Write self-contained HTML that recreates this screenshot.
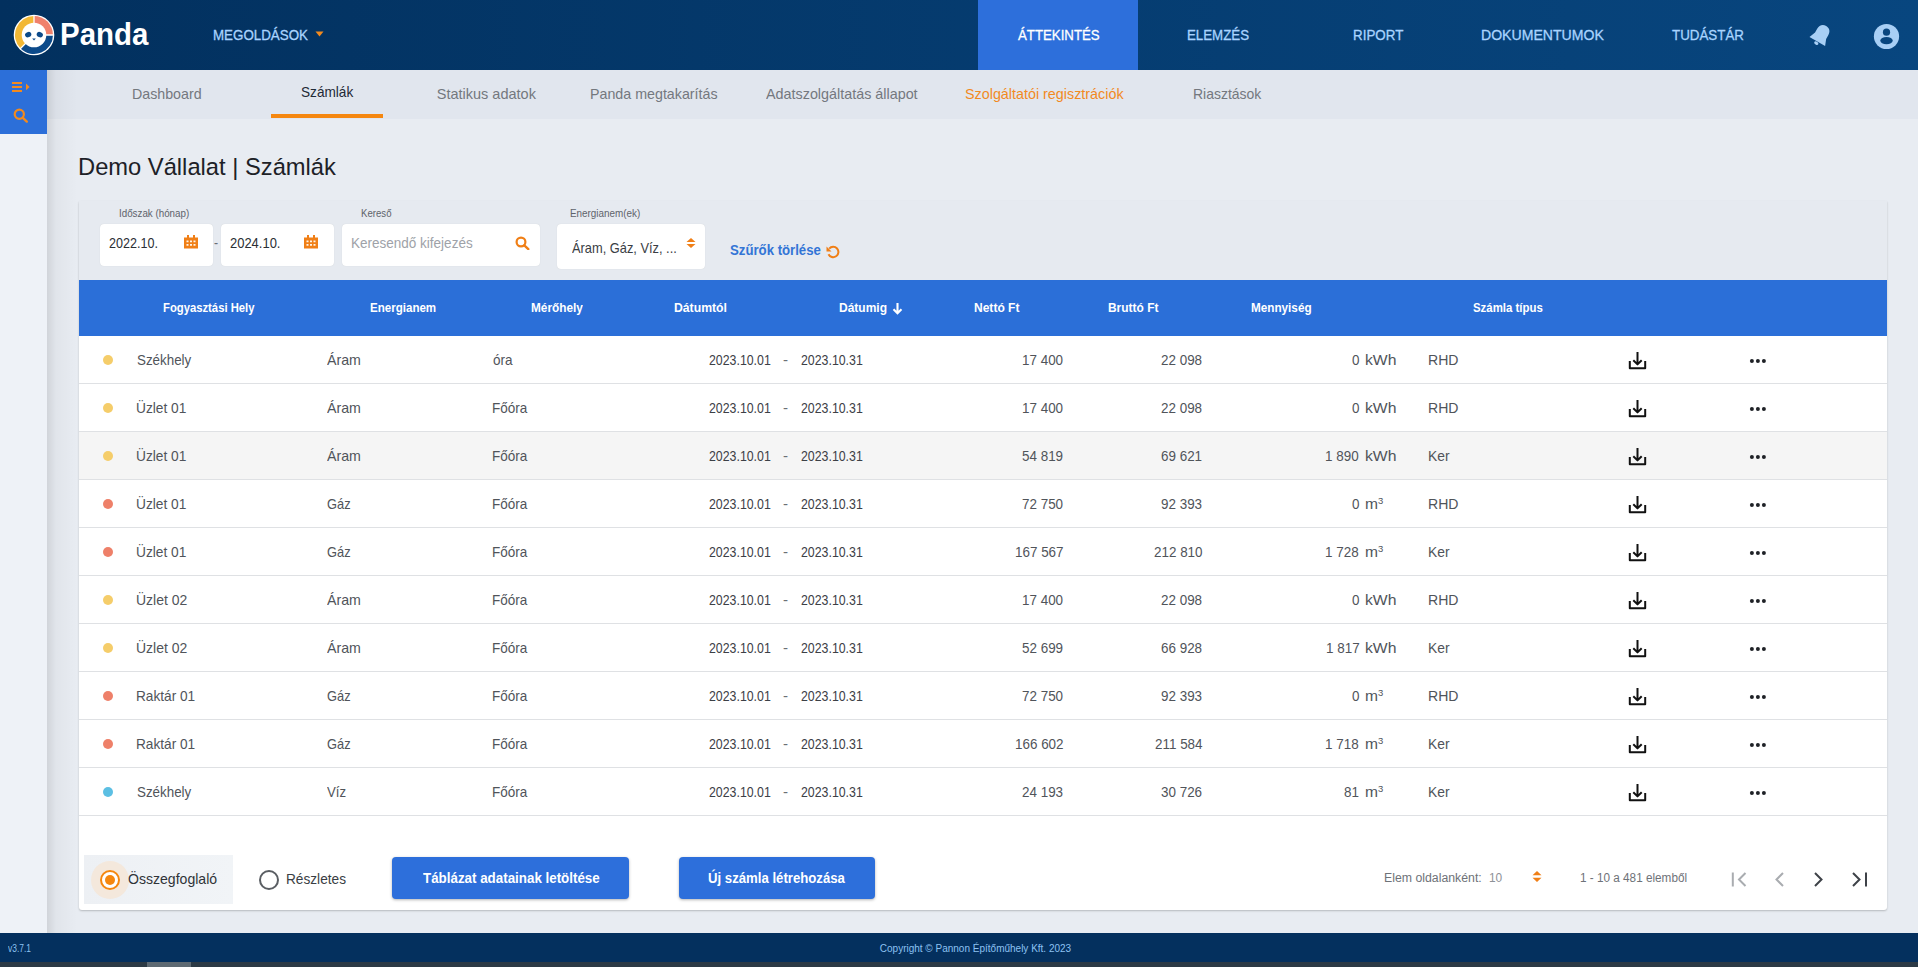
<!DOCTYPE html>
<html><head><meta charset="utf-8"><title>Panda - Számlák</title>
<style>
*{box-sizing:border-box;margin:0;padding:0}
html,body{width:1918px;height:967px;overflow:hidden}
body{background:#E8ECF2;font-family:"Liberation Sans",sans-serif;position:relative}
.a{position:absolute;display:block}
.t{position:absolute;white-space:nowrap;transform-origin:0 0;display:block}
</style></head><body>
<!-- header -->
<div class="a" style="left:0;top:0;width:1918px;height:70px;background:linear-gradient(90deg,#02305E 0%,#08467F 100%)"></div>
<div class="a" style="left:978px;top:0;width:160px;height:70px;background:#2D6FDB"></div>
<svg class="a" style="left:13px;top:14px" width="42" height="42" viewBox="0 0 42 42">
<circle cx="21" cy="21" r="20.3" fill="#FFFFFF"/>
<path d="M21 21 L21 2 A19 19 0 0 1 40 21 Z" fill="#F0816C"/>
<path d="M21 21 L40 21 A19 19 0 0 1 7.56 34.44 Z" fill="#0C4A8A"/>
<path d="M21 21 L7.56 34.44 A19 19 0 0 1 21 2 Z" fill="#F2B835"/>
<path d="M21 1.5 V21 H40.5 M21 21 L7 35" stroke="#FFFFFF" stroke-width="1.3" fill="none"/>
<circle cx="21" cy="21" r="12.3" fill="#FFFFFF"/>
<ellipse cx="15.2" cy="20.6" rx="3.2" ry="2.6" transform="rotate(-20 15.2 20.6)" fill="#0C4A8A"/>
<ellipse cx="26.8" cy="20.6" rx="3.2" ry="2.6" transform="rotate(20 26.8 20.6)" fill="#0C4A8A"/>
<path d="M19.2 24.6 L22.8 24.6 L21 26.4Z" fill="#0C4A8A"/>
</svg>
<svg class="a" style="left:315px;top:31px" width="9" height="6" viewBox="0 0 9 6"><path d="M0.5 0.5h8L4.5 5.5z" fill="#F28A1E"/></svg>
<svg class="a" style="left:1806px;top:21px" width="30" height="30" viewBox="0 0 30 30">
 <g transform="rotate(30 15 14)"><path d="M15 3.6C10.6 3.6 8.6 6.8 8.6 10.6V14.8L6 21.4H24L21.4 14.8V10.6C21.4 6.8 19.4 3.6 15 3.6Z" fill="#A8CFF5"/><ellipse cx="15" cy="23.4" rx="2.3" ry="1.5" fill="#A8CFF5"/></g></svg>
<svg class="a" style="left:1873px;top:23px" width="27" height="27" viewBox="0 0 27 27">
 <circle cx="13.5" cy="13.5" r="12.6" fill="#A8CFF5"/><circle cx="13.5" cy="9.2" r="3.6" fill="#08467F"/><ellipse cx="13.5" cy="17.6" rx="6.2" ry="3.6" fill="#08467F"/></svg>
<!-- sidebar -->
<div class="a" style="left:0;top:70px;width:47px;height:863px;background:#EEF2F7"></div>
<div class="a" style="left:0;top:70px;width:47px;height:64px;background:#2C6FD9"></div>
<svg class="a" style="left:11px;top:81px" width="20" height="12" viewBox="0 0 20 12">
 <path d="M1 1.9h10M1 5.9h10M1 9.9h10" stroke="#F28A1E" stroke-width="2"/><path d="M15 2.6v6.6l3.6-3.3z" fill="#F28A1E"/></svg>
<svg class="a" style="left:13px;top:108px" width="16" height="15" viewBox="0 0 16 15">
 <circle cx="6.3" cy="6.3" r="4.6" fill="none" stroke="#F28A1E" stroke-width="2.2"/><path d="M9.6 9.6l4.2 4" stroke="#F28A1E" stroke-width="2.4" stroke-linecap="round"/></svg>
<!-- tabs -->
<div class="a" style="left:47px;top:70px;width:1871px;height:48.7px;background:#E1E6EE"></div>
<div class="a" style="left:47px;top:70px;width:30px;height:863px;background:linear-gradient(90deg,rgba(0,0,0,.10),rgba(0,0,0,.03) 30%,rgba(0,0,0,0))"></div>
<div class="a" style="left:271px;top:114px;width:112px;height:4px;background:#F5870F"></div>
<!-- card -->
<div class="a" style="left:79px;top:201px;width:1808px;height:709px;background:#FFFFFF;border-radius:0 0 3px 3px;box-shadow:0 1px 2px rgba(0,0,0,.22)"></div>
<div class="a" style="left:79px;top:201px;width:1808px;height:79px;background:#E6EAF0"></div>
<div class="a" style="left:78px;top:204px;width:1px;height:76px;background:#D8DCE2"></div>
<!-- inputs -->
<div class="a" style="left:100px;top:224px;width:113px;height:42px;background:#fff;border-radius:4px;box-shadow:0 0 1px rgba(0,0,0,.15)"></div>
<div class="a" style="left:221px;top:224px;width:113px;height:42px;background:#fff;border-radius:4px;box-shadow:0 0 1px rgba(0,0,0,.15)"></div>
<div class="a" style="left:342px;top:224px;width:198px;height:42px;background:#fff;border-radius:4px;box-shadow:0 0 1px rgba(0,0,0,.15)"></div>
<div class="a" style="left:557px;top:224px;width:148px;height:45px;background:#fff;border-radius:4px;box-shadow:0 0 1px rgba(0,0,0,.15)"></div>
<svg class="a" style="left:184px;top:235px" width="14" height="14" viewBox="0 0 14 14"><path d="M0 2.5h14v11H0z M3 0h2v3H3z M9 0h2v3H9z" fill="#F07F16"/>
 <path d="M2.5 5.5h2v1.8h-2zM6 5.5h2v1.8H6zM9.5 5.5h2v1.8h-2zM2.5 9h2v1.8h-2zM6 9h2v1.8H6zM9.5 9h2v1.8h-2z" fill="#FFF4E6"/></svg>
<svg class="a" style="left:304px;top:235px" width="14" height="14" viewBox="0 0 14 14"><path d="M0 2.5h14v11H0z M3 0h2v3H3z M9 0h2v3H9z" fill="#F07F16"/>
 <path d="M2.5 5.5h2v1.8h-2zM6 5.5h2v1.8H6zM9.5 5.5h2v1.8h-2zM2.5 9h2v1.8h-2zM6 9h2v1.8H6zM9.5 9h2v1.8h-2z" fill="#FFF4E6"/></svg>
<svg class="a" style="left:515px;top:236px" width="15" height="14" viewBox="0 0 15 14">
 <circle cx="6" cy="6" r="4.4" fill="none" stroke="#F07F16" stroke-width="2.2"/><path d="M9.3 9.3l4 3.8" stroke="#F07F16" stroke-width="2.4" stroke-linecap="round"/></svg>
<svg class="a" style="left:686px;top:238px" width="10" height="10" viewBox="0 0 10 10"><path d="M5 0L9.5 4H0.5z M0.5 6h9L5 10z" fill="#F07F16"/></svg>
<svg class="a" style="left:825px;top:245px" width="16" height="14" viewBox="0 0 16 14">
 <path d="M4.2 3.6A5.2 5.2 0 1 1 3.5 9.2" fill="none" stroke="#F07F16" stroke-width="2"/><path d="M1.5 1.5v5h5z" fill="#F07F16"/></svg>
<!-- table header -->
<div class="a" style="left:79px;top:280px;width:1808px;height:56px;background:#2B6FD8"></div>
<svg class="a" style="left:892px;top:302px" width="11" height="13" viewBox="0 0 11 13"><path d="M5.5 1v10M1.5 7.3l4 4 4-4" fill="none" stroke="#fff" stroke-width="2.1"/></svg>
<div class="a" style="left:79px;top:336px;width:1808px;height:48px;background:#FFFFFF"></div>
<div class="a" style="left:79px;top:383px;width:1808px;height:1px;background:#DFE1E4"></div>
<div class="a" style="left:103px;top:355px;width:10px;height:10px;border-radius:50%;background:#F5CD6A"></div>
<svg class="a" style="left:1627px;top:350px" width="21" height="21" viewBox="0 0 21 21"><path d="M10.5 2v12.2M6.3 10.2l4.2 4.2 4.2-4.2M2.8 11v7.3h15.4V11" fill="none" stroke="#111" stroke-width="2" stroke-linejoin="round"/></svg>
<svg class="a" style="left:1749px;top:357px" width="18" height="6" viewBox="0 0 18 6"><circle cx="2.9" cy="4" r="2" fill="#1E2126"/><circle cx="8.9" cy="4" r="2" fill="#1E2126"/><circle cx="14.9" cy="4" r="2" fill="#1E2126"/></svg>
<div class="a" style="left:79px;top:384px;width:1808px;height:48px;background:#FFFFFF"></div>
<div class="a" style="left:79px;top:431px;width:1808px;height:1px;background:#DFE1E4"></div>
<div class="a" style="left:103px;top:403px;width:10px;height:10px;border-radius:50%;background:#F5CD6A"></div>
<svg class="a" style="left:1627px;top:398px" width="21" height="21" viewBox="0 0 21 21"><path d="M10.5 2v12.2M6.3 10.2l4.2 4.2 4.2-4.2M2.8 11v7.3h15.4V11" fill="none" stroke="#111" stroke-width="2" stroke-linejoin="round"/></svg>
<svg class="a" style="left:1749px;top:405px" width="18" height="6" viewBox="0 0 18 6"><circle cx="2.9" cy="4" r="2" fill="#1E2126"/><circle cx="8.9" cy="4" r="2" fill="#1E2126"/><circle cx="14.9" cy="4" r="2" fill="#1E2126"/></svg>
<div class="a" style="left:79px;top:432px;width:1808px;height:48px;background:#F5F5F5"></div>
<div class="a" style="left:79px;top:479px;width:1808px;height:1px;background:#DFE1E4"></div>
<div class="a" style="left:103px;top:451px;width:10px;height:10px;border-radius:50%;background:#F5CD6A"></div>
<svg class="a" style="left:1627px;top:446px" width="21" height="21" viewBox="0 0 21 21"><path d="M10.5 2v12.2M6.3 10.2l4.2 4.2 4.2-4.2M2.8 11v7.3h15.4V11" fill="none" stroke="#111" stroke-width="2" stroke-linejoin="round"/></svg>
<svg class="a" style="left:1749px;top:453px" width="18" height="6" viewBox="0 0 18 6"><circle cx="2.9" cy="4" r="2" fill="#1E2126"/><circle cx="8.9" cy="4" r="2" fill="#1E2126"/><circle cx="14.9" cy="4" r="2" fill="#1E2126"/></svg>
<div class="a" style="left:79px;top:480px;width:1808px;height:48px;background:#FFFFFF"></div>
<div class="a" style="left:79px;top:527px;width:1808px;height:1px;background:#DFE1E4"></div>
<div class="a" style="left:103px;top:499px;width:10px;height:10px;border-radius:50%;background:#EE8069"></div>
<svg class="a" style="left:1627px;top:494px" width="21" height="21" viewBox="0 0 21 21"><path d="M10.5 2v12.2M6.3 10.2l4.2 4.2 4.2-4.2M2.8 11v7.3h15.4V11" fill="none" stroke="#111" stroke-width="2" stroke-linejoin="round"/></svg>
<svg class="a" style="left:1749px;top:501px" width="18" height="6" viewBox="0 0 18 6"><circle cx="2.9" cy="4" r="2" fill="#1E2126"/><circle cx="8.9" cy="4" r="2" fill="#1E2126"/><circle cx="14.9" cy="4" r="2" fill="#1E2126"/></svg>
<div class="a" style="left:79px;top:528px;width:1808px;height:48px;background:#FFFFFF"></div>
<div class="a" style="left:79px;top:575px;width:1808px;height:1px;background:#DFE1E4"></div>
<div class="a" style="left:103px;top:547px;width:10px;height:10px;border-radius:50%;background:#EE8069"></div>
<svg class="a" style="left:1627px;top:542px" width="21" height="21" viewBox="0 0 21 21"><path d="M10.5 2v12.2M6.3 10.2l4.2 4.2 4.2-4.2M2.8 11v7.3h15.4V11" fill="none" stroke="#111" stroke-width="2" stroke-linejoin="round"/></svg>
<svg class="a" style="left:1749px;top:549px" width="18" height="6" viewBox="0 0 18 6"><circle cx="2.9" cy="4" r="2" fill="#1E2126"/><circle cx="8.9" cy="4" r="2" fill="#1E2126"/><circle cx="14.9" cy="4" r="2" fill="#1E2126"/></svg>
<div class="a" style="left:79px;top:576px;width:1808px;height:48px;background:#FFFFFF"></div>
<div class="a" style="left:79px;top:623px;width:1808px;height:1px;background:#DFE1E4"></div>
<div class="a" style="left:103px;top:595px;width:10px;height:10px;border-radius:50%;background:#F5CD6A"></div>
<svg class="a" style="left:1627px;top:590px" width="21" height="21" viewBox="0 0 21 21"><path d="M10.5 2v12.2M6.3 10.2l4.2 4.2 4.2-4.2M2.8 11v7.3h15.4V11" fill="none" stroke="#111" stroke-width="2" stroke-linejoin="round"/></svg>
<svg class="a" style="left:1749px;top:597px" width="18" height="6" viewBox="0 0 18 6"><circle cx="2.9" cy="4" r="2" fill="#1E2126"/><circle cx="8.9" cy="4" r="2" fill="#1E2126"/><circle cx="14.9" cy="4" r="2" fill="#1E2126"/></svg>
<div class="a" style="left:79px;top:624px;width:1808px;height:48px;background:#FFFFFF"></div>
<div class="a" style="left:79px;top:671px;width:1808px;height:1px;background:#DFE1E4"></div>
<div class="a" style="left:103px;top:643px;width:10px;height:10px;border-radius:50%;background:#F5CD6A"></div>
<svg class="a" style="left:1627px;top:638px" width="21" height="21" viewBox="0 0 21 21"><path d="M10.5 2v12.2M6.3 10.2l4.2 4.2 4.2-4.2M2.8 11v7.3h15.4V11" fill="none" stroke="#111" stroke-width="2" stroke-linejoin="round"/></svg>
<svg class="a" style="left:1749px;top:645px" width="18" height="6" viewBox="0 0 18 6"><circle cx="2.9" cy="4" r="2" fill="#1E2126"/><circle cx="8.9" cy="4" r="2" fill="#1E2126"/><circle cx="14.9" cy="4" r="2" fill="#1E2126"/></svg>
<div class="a" style="left:79px;top:672px;width:1808px;height:48px;background:#FFFFFF"></div>
<div class="a" style="left:79px;top:719px;width:1808px;height:1px;background:#DFE1E4"></div>
<div class="a" style="left:103px;top:691px;width:10px;height:10px;border-radius:50%;background:#EE8069"></div>
<svg class="a" style="left:1627px;top:686px" width="21" height="21" viewBox="0 0 21 21"><path d="M10.5 2v12.2M6.3 10.2l4.2 4.2 4.2-4.2M2.8 11v7.3h15.4V11" fill="none" stroke="#111" stroke-width="2" stroke-linejoin="round"/></svg>
<svg class="a" style="left:1749px;top:693px" width="18" height="6" viewBox="0 0 18 6"><circle cx="2.9" cy="4" r="2" fill="#1E2126"/><circle cx="8.9" cy="4" r="2" fill="#1E2126"/><circle cx="14.9" cy="4" r="2" fill="#1E2126"/></svg>
<div class="a" style="left:79px;top:720px;width:1808px;height:48px;background:#FFFFFF"></div>
<div class="a" style="left:79px;top:767px;width:1808px;height:1px;background:#DFE1E4"></div>
<div class="a" style="left:103px;top:739px;width:10px;height:10px;border-radius:50%;background:#EE8069"></div>
<svg class="a" style="left:1627px;top:734px" width="21" height="21" viewBox="0 0 21 21"><path d="M10.5 2v12.2M6.3 10.2l4.2 4.2 4.2-4.2M2.8 11v7.3h15.4V11" fill="none" stroke="#111" stroke-width="2" stroke-linejoin="round"/></svg>
<svg class="a" style="left:1749px;top:741px" width="18" height="6" viewBox="0 0 18 6"><circle cx="2.9" cy="4" r="2" fill="#1E2126"/><circle cx="8.9" cy="4" r="2" fill="#1E2126"/><circle cx="14.9" cy="4" r="2" fill="#1E2126"/></svg>
<div class="a" style="left:79px;top:768px;width:1808px;height:48px;background:#FFFFFF"></div>
<div class="a" style="left:79px;top:815px;width:1808px;height:1px;background:#DFE1E4"></div>
<div class="a" style="left:103px;top:787px;width:10px;height:10px;border-radius:50%;background:#5CBFE3"></div>
<svg class="a" style="left:1627px;top:782px" width="21" height="21" viewBox="0 0 21 21"><path d="M10.5 2v12.2M6.3 10.2l4.2 4.2 4.2-4.2M2.8 11v7.3h15.4V11" fill="none" stroke="#111" stroke-width="2" stroke-linejoin="round"/></svg>
<svg class="a" style="left:1749px;top:789px" width="18" height="6" viewBox="0 0 18 6"><circle cx="2.9" cy="4" r="2" fill="#1E2126"/><circle cx="8.9" cy="4" r="2" fill="#1E2126"/><circle cx="14.9" cy="4" r="2" fill="#1E2126"/></svg>
<!-- bottom controls -->
<div class="a" style="left:84px;top:855px;width:149px;height:49px;background:linear-gradient(90deg,#EDF0F4,#F1F4F7)"></div>
<div class="a" style="left:91px;top:861px;width:38px;height:38px;border-radius:50%;background:#F4E8DC"></div>
<div class="a" style="left:100px;top:870px;width:20px;height:20px;border-radius:50%;border:2px solid #F5870F;background:#fff"></div>
<div class="a" style="left:105px;top:875px;width:10px;height:10px;border-radius:50%;background:#F5870F"></div>
<div class="a" style="left:258.5px;top:869.5px;width:20px;height:20px;border-radius:50%;border:2px solid #5A5E63;background:#fff"></div>
<div class="a" style="left:392px;top:857px;width:237px;height:42px;background:#2D6FDB;border-radius:4px;box-shadow:0 1px 3px rgba(0,0,0,.3)"></div>
<div class="a" style="left:679px;top:857px;width:196px;height:42px;background:#2D6FDB;border-radius:4px;box-shadow:0 1px 3px rgba(0,0,0,.3)"></div>
<svg class="a" style="left:1532px;top:871px" width="10" height="11" viewBox="0 0 10 11"><path d="M5 0L9.5 4.2H0.5z M0.5 6.8h9L5 11z" fill="#F07F16"/></svg>
<svg class="a" style="left:1730px;top:871px" width="18" height="17" viewBox="0 0 18 17"><path d="M2.8 1.5v14" stroke="#A9ACB0" stroke-width="2"/><path d="M15.5 2l-6.5 6.5 6.5 6.5" fill="none" stroke="#A9ACB0" stroke-width="2"/></svg>
<svg class="a" style="left:1773px;top:871px" width="12" height="17" viewBox="0 0 12 17"><path d="M10 2l-6.5 6.5 6.5 6.5" fill="none" stroke="#A9ACB0" stroke-width="2"/></svg>
<svg class="a" style="left:1813px;top:871px" width="12" height="17" viewBox="0 0 12 17"><path d="M2 2l6.5 6.5-6.5 6.5" fill="none" stroke="#3E4248" stroke-width="2"/></svg>
<svg class="a" style="left:1851px;top:871px" width="18" height="17" viewBox="0 0 18 17"><path d="M2 2l6.5 6.5-6.5 6.5" fill="none" stroke="#3E4248" stroke-width="2"/><path d="M15 1.5v14" stroke="#3E4248" stroke-width="2"/></svg>
<!-- footer -->
<div class="a" style="left:0;top:933px;width:1918px;height:29px;background:#04305E"></div>
<div class="a" style="left:0;top:962px;width:1918px;height:5px;background:#2C3A45"></div>
<div class="a" style="left:147px;top:962px;width:44px;height:5px;background:#5E6A73"></div>
<span class="t" style="left:60.49px;top:17.80px;font-size:32px;line-height:32px;color:#FFFFFF;font-weight:bold;transform:scaleX(0.9200);">Panda</span>
<span class="t" style="left:212.73px;top:28.47px;font-size:14.5px;line-height:14.5px;color:#A9D4FF;transform:scaleX(0.9205);-webkit-text-stroke:0.3px currentColor;">MEGOLDÁSOK</span>
<span class="t" style="left:1018.00px;top:27.97px;font-size:14.5px;line-height:14.5px;color:#FFFFFF;transform:scaleX(0.9128);-webkit-text-stroke:0.3px currentColor;">ÁTTEKINTÉS</span>
<span class="t" style="left:1186.64px;top:27.97px;font-size:14.5px;line-height:14.5px;color:#A9D4FF;transform:scaleX(0.9160);-webkit-text-stroke:0.3px currentColor;">ELEMZÉS</span>
<span class="t" style="left:1352.93px;top:27.97px;font-size:14.5px;line-height:14.5px;color:#A9D4FF;transform:scaleX(0.9233);-webkit-text-stroke:0.3px currentColor;">RIPORT</span>
<span class="t" style="left:1481.37px;top:27.97px;font-size:14.5px;line-height:14.5px;color:#A9D4FF;transform:scaleX(0.9710);-webkit-text-stroke:0.3px currentColor;">DOKUMENTUMOK</span>
<span class="t" style="left:1671.73px;top:27.97px;font-size:14.5px;line-height:14.5px;color:#A9D4FF;transform:scaleX(0.9204);-webkit-text-stroke:0.3px currentColor;">TUDÁSTÁR</span>
<span class="t" style="left:132.36px;top:86.77px;font-size:14.5px;line-height:14.5px;color:#74787E;transform:scaleX(0.9811);">Dashboard</span>
<span class="t" style="left:300.69px;top:84.67px;font-size:14.5px;line-height:14.5px;color:#1F2A36;transform:scaleX(0.9390);">Számlák</span>
<span class="t" style="left:436.75px;top:86.77px;font-size:14.5px;line-height:14.5px;color:#74787E;">Statikus adatok</span>
<span class="t" style="left:590.16px;top:86.77px;font-size:14.5px;line-height:14.5px;color:#74787E;transform:scaleX(0.9828);">Panda megtakarítás</span>
<span class="t" style="left:766.00px;top:86.77px;font-size:14.5px;line-height:14.5px;color:#74787E;transform:scaleX(0.9899);">Adatszolgáltatás állapot</span>
<span class="t" style="left:965.05px;top:86.77px;font-size:14.5px;line-height:14.5px;color:#F28A1E;transform:scaleX(0.9886);">Szolgáltatói regisztrációk</span>
<span class="t" style="left:1192.88px;top:86.77px;font-size:14.5px;line-height:14.5px;color:#74787E;transform:scaleX(0.9635);">Riasztások</span>
<span class="t" style="left:78.10px;top:154.88px;font-size:24.5px;line-height:24.5px;color:#1D2127;transform:scaleX(0.9679);">Demo Vállalat | Számlák</span>
<span class="t" style="left:118.62px;top:208.90px;font-size:10px;line-height:10px;color:#5E636B;transform:scaleX(0.9786);">Időszak (hónap)</span>
<span class="t" style="left:360.53px;top:208.90px;font-size:10px;line-height:10px;color:#5E636B;transform:scaleX(0.9622);">Kereső</span>
<span class="t" style="left:570.41px;top:208.90px;font-size:10px;line-height:10px;color:#5E636B;transform:scaleX(0.9871);">Energianem(ek)</span>
<span class="t" style="left:109.27px;top:235.58px;font-size:14.5px;line-height:14.5px;color:#2B2F35;transform:scaleX(0.8662);">2022.10.</span>
<span class="t" style="left:229.75px;top:235.58px;font-size:14.5px;line-height:14.5px;color:#2B2F35;transform:scaleX(0.8938);">2024.10.</span>
<span class="t" style="left:214.45px;top:235.58px;font-size:14.5px;line-height:14.5px;color:#6B6F75;transform:scaleX(0.8445);">-</span>
<span class="t" style="left:350.72px;top:235.58px;font-size:14.5px;line-height:14.5px;color:#9EA2A8;transform:scaleX(0.9317);">Keresendő kifejezés</span>
<span class="t" style="left:572.10px;top:241.38px;font-size:14.5px;line-height:14.5px;color:#3A3E44;transform:scaleX(0.8848);">Áram, Gáz, Víz, ...</span>
<span class="t" style="left:730.40px;top:243.00px;font-size:14px;line-height:14px;color:#3375D6;font-weight:bold;transform:scaleX(0.9419);">Szűrők törlése</span>
<span class="t" style="left:162.57px;top:302.27px;font-size:12.5px;line-height:12.5px;color:#FFFFFF;font-weight:bold;transform:scaleX(0.9019);">Fogyasztási Hely</span>
<span class="t" style="left:370.25px;top:302.27px;font-size:12.5px;line-height:12.5px;color:#FFFFFF;font-weight:bold;transform:scaleX(0.9243);">Energianem</span>
<span class="t" style="left:531.23px;top:302.27px;font-size:12.5px;line-height:12.5px;color:#FFFFFF;font-weight:bold;transform:scaleX(0.9444);">Mérőhely</span>
<span class="t" style="left:673.91px;top:302.27px;font-size:12.5px;line-height:12.5px;color:#FFFFFF;font-weight:bold;transform:scaleX(0.9771);">Dátumtól</span>
<span class="t" style="left:838.82px;top:302.27px;font-size:12.5px;line-height:12.5px;color:#FFFFFF;font-weight:bold;transform:scaleX(0.9592);">Dátumig</span>
<span class="t" style="left:974.02px;top:302.27px;font-size:12.5px;line-height:12.5px;color:#FFFFFF;font-weight:bold;transform:scaleX(0.9622);">Nettó Ft</span>
<span class="t" style="left:1107.72px;top:302.27px;font-size:12.5px;line-height:12.5px;color:#FFFFFF;font-weight:bold;transform:scaleX(0.9554);">Bruttó Ft</span>
<span class="t" style="left:1251.24px;top:302.27px;font-size:12.5px;line-height:12.5px;color:#FFFFFF;font-weight:bold;transform:scaleX(0.9374);">Mennyiség</span>
<span class="t" style="left:1473.16px;top:302.27px;font-size:12.5px;line-height:12.5px;color:#FFFFFF;font-weight:bold;transform:scaleX(0.9126);">Számla típus</span>
<span class="t" style="left:136.60px;top:352.25px;font-size:15px;line-height:15px;color:#50545A;transform:scaleX(0.8917);">Székhely</span>
<span class="t" style="left:327.30px;top:352.25px;font-size:15px;line-height:15px;color:#50545A;transform:scaleX(0.9462);">Áram</span>
<span class="t" style="left:492.66px;top:352.25px;font-size:15px;line-height:15px;color:#50545A;transform:scaleX(0.9015);">óra</span>
<span class="t" style="left:1427.87px;top:352.25px;font-size:15px;line-height:15px;color:#50545A;transform:scaleX(0.9379);">RHD</span>
<span class="t" style="left:709.18px;top:352.25px;font-size:15px;line-height:15px;color:#3C4046;transform:scaleX(0.8228);">2023.10.01</span>
<span class="t" style="left:801.38px;top:352.25px;font-size:15px;line-height:15px;color:#3C4046;transform:scaleX(0.8228);">2023.10.31</span>
<span class="t" style="left:783.32px;top:351.75px;font-size:15px;line-height:15px;color:#6B6F75;transform:scaleX(1.0068);">-</span>
<span class="t" style="left:1021.86px;top:352.25px;font-size:15px;line-height:15px;color:#50545A;transform:scaleX(0.8957);">17 400</span>
<span class="t" style="left:1161.43px;top:352.25px;font-size:15px;line-height:15px;color:#50545A;transform:scaleX(0.8957);">22 098</span>
<span class="t" style="left:1351.51px;top:352.25px;font-size:15px;line-height:15px;color:#50545A;transform:scaleX(0.8957);">0</span>
<span class="t" style="left:1365.48px;top:352.25px;font-size:15px;line-height:15px;color:#50545A;transform:scaleX(1.0481);">kWh</span>
<span class="t" style="left:136.17px;top:400.25px;font-size:15px;line-height:15px;color:#50545A;transform:scaleX(0.9158);">Üzlet 01</span>
<span class="t" style="left:327.30px;top:400.25px;font-size:15px;line-height:15px;color:#50545A;transform:scaleX(0.9462);">Áram</span>
<span class="t" style="left:492.12px;top:400.25px;font-size:15px;line-height:15px;color:#50545A;transform:scaleX(0.9012);">Főóra</span>
<span class="t" style="left:1427.87px;top:400.25px;font-size:15px;line-height:15px;color:#50545A;transform:scaleX(0.9379);">RHD</span>
<span class="t" style="left:709.18px;top:400.25px;font-size:15px;line-height:15px;color:#3C4046;transform:scaleX(0.8228);">2023.10.01</span>
<span class="t" style="left:801.38px;top:400.25px;font-size:15px;line-height:15px;color:#3C4046;transform:scaleX(0.8228);">2023.10.31</span>
<span class="t" style="left:783.32px;top:399.75px;font-size:15px;line-height:15px;color:#6B6F75;transform:scaleX(1.0068);">-</span>
<span class="t" style="left:1021.86px;top:400.25px;font-size:15px;line-height:15px;color:#50545A;transform:scaleX(0.8957);">17 400</span>
<span class="t" style="left:1161.43px;top:400.25px;font-size:15px;line-height:15px;color:#50545A;transform:scaleX(0.8957);">22 098</span>
<span class="t" style="left:1351.51px;top:400.25px;font-size:15px;line-height:15px;color:#50545A;transform:scaleX(0.8957);">0</span>
<span class="t" style="left:1365.48px;top:400.25px;font-size:15px;line-height:15px;color:#50545A;transform:scaleX(1.0481);">kWh</span>
<span class="t" style="left:136.17px;top:448.25px;font-size:15px;line-height:15px;color:#50545A;transform:scaleX(0.9158);">Üzlet 01</span>
<span class="t" style="left:327.30px;top:448.25px;font-size:15px;line-height:15px;color:#50545A;transform:scaleX(0.9462);">Áram</span>
<span class="t" style="left:492.12px;top:448.25px;font-size:15px;line-height:15px;color:#50545A;transform:scaleX(0.9012);">Főóra</span>
<span class="t" style="left:1427.89px;top:448.25px;font-size:15px;line-height:15px;color:#50545A;transform:scaleX(0.9224);">Ker</span>
<span class="t" style="left:709.18px;top:448.25px;font-size:15px;line-height:15px;color:#3C4046;transform:scaleX(0.8228);">2023.10.01</span>
<span class="t" style="left:801.38px;top:448.25px;font-size:15px;line-height:15px;color:#3C4046;transform:scaleX(0.8228);">2023.10.31</span>
<span class="t" style="left:783.32px;top:447.75px;font-size:15px;line-height:15px;color:#6B6F75;transform:scaleX(1.0068);">-</span>
<span class="t" style="left:1021.99px;top:448.25px;font-size:15px;line-height:15px;color:#50545A;transform:scaleX(0.8957);">54 819</span>
<span class="t" style="left:1161.49px;top:448.25px;font-size:15px;line-height:15px;color:#50545A;transform:scaleX(0.8957);">69 621</span>
<span class="t" style="left:1325.38px;top:448.25px;font-size:15px;line-height:15px;color:#50545A;transform:scaleX(0.8957);">1 890</span>
<span class="t" style="left:1365.48px;top:448.25px;font-size:15px;line-height:15px;color:#50545A;transform:scaleX(1.0481);">kWh</span>
<span class="t" style="left:136.17px;top:496.25px;font-size:15px;line-height:15px;color:#50545A;transform:scaleX(0.9158);">Üzlet 01</span>
<span class="t" style="left:326.66px;top:496.25px;font-size:15px;line-height:15px;color:#50545A;transform:scaleX(0.8569);">Gáz</span>
<span class="t" style="left:492.12px;top:496.25px;font-size:15px;line-height:15px;color:#50545A;transform:scaleX(0.9012);">Főóra</span>
<span class="t" style="left:1427.87px;top:496.25px;font-size:15px;line-height:15px;color:#50545A;transform:scaleX(0.9379);">RHD</span>
<span class="t" style="left:709.18px;top:496.25px;font-size:15px;line-height:15px;color:#3C4046;transform:scaleX(0.8228);">2023.10.01</span>
<span class="t" style="left:801.38px;top:496.25px;font-size:15px;line-height:15px;color:#3C4046;transform:scaleX(0.8228);">2023.10.31</span>
<span class="t" style="left:783.32px;top:495.75px;font-size:15px;line-height:15px;color:#6B6F75;transform:scaleX(1.0068);">-</span>
<span class="t" style="left:1021.86px;top:496.25px;font-size:15px;line-height:15px;color:#50545A;transform:scaleX(0.8957);">72 750</span>
<span class="t" style="left:1161.43px;top:496.25px;font-size:15px;line-height:15px;color:#50545A;transform:scaleX(0.8957);">92 393</span>
<span class="t" style="left:1351.51px;top:496.25px;font-size:15px;line-height:15px;color:#50545A;transform:scaleX(0.8957);">0</span>
<span class="t" style="left:1365.49px;top:496.25px;font-size:15px;line-height:15px;color:#50545A;transform:scaleX(1.0402);">m</span>
<span class="t" style="left:1378.12px;top:496.85px;font-size:9px;line-height:9px;color:#50545A;transform:scaleX(1.0526);">3</span>
<span class="t" style="left:136.17px;top:544.25px;font-size:15px;line-height:15px;color:#50545A;transform:scaleX(0.9158);">Üzlet 01</span>
<span class="t" style="left:326.66px;top:544.25px;font-size:15px;line-height:15px;color:#50545A;transform:scaleX(0.8569);">Gáz</span>
<span class="t" style="left:492.12px;top:544.25px;font-size:15px;line-height:15px;color:#50545A;transform:scaleX(0.9012);">Főóra</span>
<span class="t" style="left:1427.89px;top:544.25px;font-size:15px;line-height:15px;color:#50545A;transform:scaleX(0.9224);">Ker</span>
<span class="t" style="left:709.18px;top:544.25px;font-size:15px;line-height:15px;color:#3C4046;transform:scaleX(0.8228);">2023.10.01</span>
<span class="t" style="left:801.38px;top:544.25px;font-size:15px;line-height:15px;color:#3C4046;transform:scaleX(0.8228);">2023.10.31</span>
<span class="t" style="left:783.32px;top:543.75px;font-size:15px;line-height:15px;color:#6B6F75;transform:scaleX(1.0068);">-</span>
<span class="t" style="left:1014.60px;top:544.25px;font-size:15px;line-height:15px;color:#50545A;transform:scaleX(0.8957);">167 567</span>
<span class="t" style="left:1153.90px;top:544.25px;font-size:15px;line-height:15px;color:#50545A;transform:scaleX(0.8957);">212 810</span>
<span class="t" style="left:1325.45px;top:544.25px;font-size:15px;line-height:15px;color:#50545A;transform:scaleX(0.8957);">1 728</span>
<span class="t" style="left:1365.49px;top:544.25px;font-size:15px;line-height:15px;color:#50545A;transform:scaleX(1.0402);">m</span>
<span class="t" style="left:1378.12px;top:544.85px;font-size:9px;line-height:9px;color:#50545A;transform:scaleX(1.0526);">3</span>
<span class="t" style="left:136.15px;top:592.25px;font-size:15px;line-height:15px;color:#50545A;transform:scaleX(0.9322);">Üzlet 02</span>
<span class="t" style="left:327.30px;top:592.25px;font-size:15px;line-height:15px;color:#50545A;transform:scaleX(0.9462);">Áram</span>
<span class="t" style="left:492.12px;top:592.25px;font-size:15px;line-height:15px;color:#50545A;transform:scaleX(0.9012);">Főóra</span>
<span class="t" style="left:1427.87px;top:592.25px;font-size:15px;line-height:15px;color:#50545A;transform:scaleX(0.9379);">RHD</span>
<span class="t" style="left:709.18px;top:592.25px;font-size:15px;line-height:15px;color:#3C4046;transform:scaleX(0.8228);">2023.10.01</span>
<span class="t" style="left:801.38px;top:592.25px;font-size:15px;line-height:15px;color:#3C4046;transform:scaleX(0.8228);">2023.10.31</span>
<span class="t" style="left:783.32px;top:591.75px;font-size:15px;line-height:15px;color:#6B6F75;transform:scaleX(1.0068);">-</span>
<span class="t" style="left:1021.86px;top:592.25px;font-size:15px;line-height:15px;color:#50545A;transform:scaleX(0.8957);">17 400</span>
<span class="t" style="left:1161.43px;top:592.25px;font-size:15px;line-height:15px;color:#50545A;transform:scaleX(0.8957);">22 098</span>
<span class="t" style="left:1351.51px;top:592.25px;font-size:15px;line-height:15px;color:#50545A;transform:scaleX(0.8957);">0</span>
<span class="t" style="left:1365.48px;top:592.25px;font-size:15px;line-height:15px;color:#50545A;transform:scaleX(1.0481);">kWh</span>
<span class="t" style="left:136.15px;top:640.25px;font-size:15px;line-height:15px;color:#50545A;transform:scaleX(0.9322);">Üzlet 02</span>
<span class="t" style="left:327.30px;top:640.25px;font-size:15px;line-height:15px;color:#50545A;transform:scaleX(0.9462);">Áram</span>
<span class="t" style="left:492.12px;top:640.25px;font-size:15px;line-height:15px;color:#50545A;transform:scaleX(0.9012);">Főóra</span>
<span class="t" style="left:1427.89px;top:640.25px;font-size:15px;line-height:15px;color:#50545A;transform:scaleX(0.9224);">Ker</span>
<span class="t" style="left:709.18px;top:640.25px;font-size:15px;line-height:15px;color:#3C4046;transform:scaleX(0.8228);">2023.10.01</span>
<span class="t" style="left:801.38px;top:640.25px;font-size:15px;line-height:15px;color:#3C4046;transform:scaleX(0.8228);">2023.10.31</span>
<span class="t" style="left:783.32px;top:639.75px;font-size:15px;line-height:15px;color:#6B6F75;transform:scaleX(1.0068);">-</span>
<span class="t" style="left:1021.99px;top:640.25px;font-size:15px;line-height:15px;color:#50545A;transform:scaleX(0.8957);">52 699</span>
<span class="t" style="left:1161.43px;top:640.25px;font-size:15px;line-height:15px;color:#50545A;transform:scaleX(0.8957);">66 928</span>
<span class="t" style="left:1325.58px;top:640.25px;font-size:15px;line-height:15px;color:#50545A;transform:scaleX(0.8957);">1 817</span>
<span class="t" style="left:1365.48px;top:640.25px;font-size:15px;line-height:15px;color:#50545A;transform:scaleX(1.0481);">kWh</span>
<span class="t" style="left:136.11px;top:688.25px;font-size:15px;line-height:15px;color:#50545A;transform:scaleX(0.9105);">Raktár 01</span>
<span class="t" style="left:326.66px;top:688.25px;font-size:15px;line-height:15px;color:#50545A;transform:scaleX(0.8569);">Gáz</span>
<span class="t" style="left:492.12px;top:688.25px;font-size:15px;line-height:15px;color:#50545A;transform:scaleX(0.9012);">Főóra</span>
<span class="t" style="left:1427.87px;top:688.25px;font-size:15px;line-height:15px;color:#50545A;transform:scaleX(0.9379);">RHD</span>
<span class="t" style="left:709.18px;top:688.25px;font-size:15px;line-height:15px;color:#3C4046;transform:scaleX(0.8228);">2023.10.01</span>
<span class="t" style="left:801.38px;top:688.25px;font-size:15px;line-height:15px;color:#3C4046;transform:scaleX(0.8228);">2023.10.31</span>
<span class="t" style="left:783.32px;top:687.75px;font-size:15px;line-height:15px;color:#6B6F75;transform:scaleX(1.0068);">-</span>
<span class="t" style="left:1021.86px;top:688.25px;font-size:15px;line-height:15px;color:#50545A;transform:scaleX(0.8957);">72 750</span>
<span class="t" style="left:1161.43px;top:688.25px;font-size:15px;line-height:15px;color:#50545A;transform:scaleX(0.8957);">92 393</span>
<span class="t" style="left:1351.51px;top:688.25px;font-size:15px;line-height:15px;color:#50545A;transform:scaleX(0.8957);">0</span>
<span class="t" style="left:1365.49px;top:688.25px;font-size:15px;line-height:15px;color:#50545A;transform:scaleX(1.0402);">m</span>
<span class="t" style="left:1378.12px;top:688.85px;font-size:9px;line-height:9px;color:#50545A;transform:scaleX(1.0526);">3</span>
<span class="t" style="left:136.11px;top:736.25px;font-size:15px;line-height:15px;color:#50545A;transform:scaleX(0.9105);">Raktár 01</span>
<span class="t" style="left:326.66px;top:736.25px;font-size:15px;line-height:15px;color:#50545A;transform:scaleX(0.8569);">Gáz</span>
<span class="t" style="left:492.12px;top:736.25px;font-size:15px;line-height:15px;color:#50545A;transform:scaleX(0.9012);">Főóra</span>
<span class="t" style="left:1427.89px;top:736.25px;font-size:15px;line-height:15px;color:#50545A;transform:scaleX(0.9224);">Ker</span>
<span class="t" style="left:709.18px;top:736.25px;font-size:15px;line-height:15px;color:#3C4046;transform:scaleX(0.8228);">2023.10.01</span>
<span class="t" style="left:801.38px;top:736.25px;font-size:15px;line-height:15px;color:#3C4046;transform:scaleX(0.8228);">2023.10.31</span>
<span class="t" style="left:783.32px;top:735.75px;font-size:15px;line-height:15px;color:#6B6F75;transform:scaleX(1.0068);">-</span>
<span class="t" style="left:1014.60px;top:736.25px;font-size:15px;line-height:15px;color:#50545A;transform:scaleX(0.8957);">166 602</span>
<span class="t" style="left:1154.84px;top:736.25px;font-size:15px;line-height:15px;color:#50545A;transform:scaleX(0.8957);">211 584</span>
<span class="t" style="left:1325.45px;top:736.25px;font-size:15px;line-height:15px;color:#50545A;transform:scaleX(0.8957);">1 718</span>
<span class="t" style="left:1365.49px;top:736.25px;font-size:15px;line-height:15px;color:#50545A;transform:scaleX(1.0402);">m</span>
<span class="t" style="left:1378.12px;top:736.85px;font-size:9px;line-height:9px;color:#50545A;transform:scaleX(1.0526);">3</span>
<span class="t" style="left:136.60px;top:784.25px;font-size:15px;line-height:15px;color:#50545A;transform:scaleX(0.8917);">Székhely</span>
<span class="t" style="left:327.23px;top:784.25px;font-size:15px;line-height:15px;color:#50545A;transform:scaleX(0.8777);">Víz</span>
<span class="t" style="left:492.12px;top:784.25px;font-size:15px;line-height:15px;color:#50545A;transform:scaleX(0.9012);">Főóra</span>
<span class="t" style="left:1427.89px;top:784.25px;font-size:15px;line-height:15px;color:#50545A;transform:scaleX(0.9224);">Ker</span>
<span class="t" style="left:709.18px;top:784.25px;font-size:15px;line-height:15px;color:#3C4046;transform:scaleX(0.8228);">2023.10.01</span>
<span class="t" style="left:801.38px;top:784.25px;font-size:15px;line-height:15px;color:#3C4046;transform:scaleX(0.8228);">2023.10.31</span>
<span class="t" style="left:783.32px;top:783.75px;font-size:15px;line-height:15px;color:#6B6F75;transform:scaleX(1.0068);">-</span>
<span class="t" style="left:1021.93px;top:784.25px;font-size:15px;line-height:15px;color:#50545A;transform:scaleX(0.8957);">24 193</span>
<span class="t" style="left:1161.43px;top:784.25px;font-size:15px;line-height:15px;color:#50545A;transform:scaleX(0.8957);">30 726</span>
<span class="t" style="left:1344.19px;top:784.25px;font-size:15px;line-height:15px;color:#50545A;transform:scaleX(0.8957);">81</span>
<span class="t" style="left:1365.49px;top:784.25px;font-size:15px;line-height:15px;color:#50545A;transform:scaleX(1.0402);">m</span>
<span class="t" style="left:1378.12px;top:784.85px;font-size:9px;line-height:9px;color:#50545A;transform:scaleX(1.0526);">3</span>
<span class="t" style="left:127.77px;top:871.67px;font-size:14.5px;line-height:14.5px;color:#2F3338;transform:scaleX(0.9699);">Összegfoglaló</span>
<span class="t" style="left:286.11px;top:871.67px;font-size:14.5px;line-height:14.5px;color:#3A3E44;transform:scaleX(0.9421);">Részletes</span>
<span class="t" style="left:422.57px;top:870.60px;font-size:14px;line-height:14px;color:#FFFFFF;font-weight:bold;transform:scaleX(0.9544);">Táblázat adatainak letöltése</span>
<span class="t" style="left:707.51px;top:870.60px;font-size:14px;line-height:14px;color:#FFFFFF;font-weight:bold;transform:scaleX(0.9411);">Új számla létrehozása</span>
<span class="t" style="left:1384.42px;top:872.38px;font-size:12.5px;line-height:12.5px;color:#6E7278;transform:scaleX(0.9837);">Elem oldalanként:</span>
<span class="t" style="left:1488.61px;top:872.38px;font-size:12.5px;line-height:12.5px;color:#8E9298;transform:scaleX(0.9520);">10</span>
<span class="t" style="left:1580.42px;top:872.38px;font-size:12.5px;line-height:12.5px;color:#6E7278;transform:scaleX(0.9395);">1 - 10 a 481 elemből</span>
<span class="t" style="left:8.46px;top:943.50px;font-size:10px;line-height:10px;color:#8CC2F2;transform:scaleX(0.8411);">v3.7.1</span>
<span class="t" style="left:879.80px;top:943.50px;font-size:10px;line-height:10px;color:#8CC2F2;">Copyright © Pannon Építőműhely Kft. 2023</span>
</body></html>
